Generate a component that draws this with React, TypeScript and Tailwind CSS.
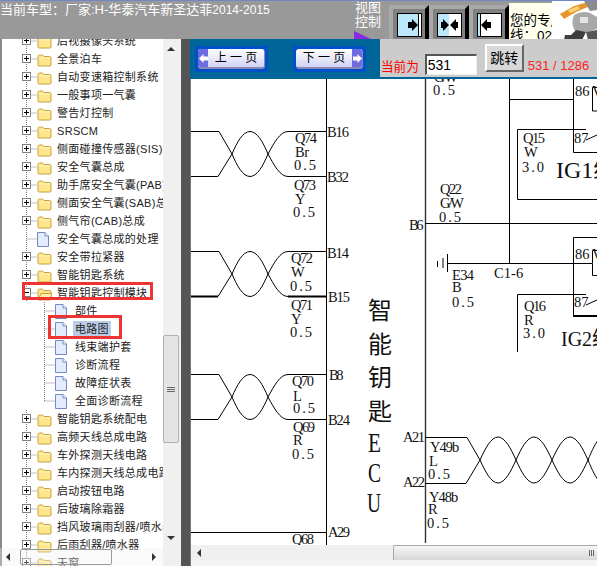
const CJK = "font-['Liberation_Sans','Noto_Sans_CJK_SC',sans-serif]";

type Kind = 'plus' | 'doc' | 'open' | 'child' | 'lastChild';

const rows: { label: string; kind: Kind }[] = [
  { label: '后视摄像头系统', kind: 'plus' },
  { label: '全景泊车', kind: 'plus' },
  { label: '自动变速箱控制系统', kind: 'plus' },
  { label: '一般事项一气囊', kind: 'plus' },
  { label: '警告灯控制', kind: 'plus' },
  { label: 'SRSCM', kind: 'plus' },
  { label: '侧面碰撞传感器(SIS)', kind: 'plus' },
  { label: '安全气囊总成', kind: 'plus' },
  { label: '助手席安全气囊(PAB)', kind: 'plus' },
  { label: '侧面安全气囊(SAB)总成', kind: 'plus' },
  { label: '侧气帘(CAB)总成', kind: 'plus' },
  { label: '安全气囊总成的处理', kind: 'doc' },
  { label: '安全带拉紧器', kind: 'plus' },
  { label: '智能钥匙系统', kind: 'plus' },
  { label: '智能钥匙控制模块', kind: 'open' },
  { label: '部件', kind: 'child' },
  { label: '电路图', kind: 'child' },
  { label: '线束端护套', kind: 'child' },
  { label: '诊断流程', kind: 'child' },
  { label: '故障症状表', kind: 'child' },
  { label: '全面诊断流程', kind: 'lastChild' },
  { label: '智能钥匙系统配电', kind: 'plus' },
  { label: '高频天线总成电路', kind: 'plus' },
  { label: '车外探测天线电路', kind: 'plus' },
  { label: '车内探测天线总成电路', kind: 'plus' },
  { label: '启动按钮电路', kind: 'plus' },
  { label: '后玻璃除霜器', kind: 'plus' },
  { label: '挡风玻璃雨刮器/喷水器', kind: 'plus' },
  { label: '后雨刮器/喷水器', kind: 'plus' },
  { label: '天窗', kind: 'plus' },
];

function Folder({ open }: { open?: boolean }) {
  return (
    <g transform="translate(37 3)">
      <path d="M1 3.5 Q1 2 2.5 2 H5.5 L7 3.5 H12.5 Q14 3.5 14 5 V12 Q14 13 13 13 H2 Q1 13 1 12 Z" fill="#ffe68a" stroke="#c7a23e" />
      {open ? <path d="M1.5 12.5 L4 6.5 H15 L13 12.5 Z" fill="#fff0ae" stroke="#c7a23e" /> : <path d="M2 5 H13" stroke="#fff6c8" />}
    </g>
  );
}

function Doc({ x }: { x: number }) {
  return (
    <g transform={`translate(${x} 2)`}>
      <path d="M0.5 0.5 H8 L11.5 4 V14.5 H0.5 Z" fill="#e4ebfb" stroke="#7189c4" />
      <path d="M8 0.5 V4 H11.5" fill="#fff" stroke="#7189c4" />
    </g>
  );
}

function TreeRow({ label, kind }: { label: string; kind: Kind }) {
  const isChild = kind === 'child' || kind === 'lastChild';
  const selected = label === '电路图';
  return (
    <div className="flex items-center h-[18px] shrink-0">
      <svg width={isChild ? 73 : 55} height="18" className="shrink-0">
        {!isChild && <path d="M26.5 0V18M26.5 9H37" stroke="#808080" strokeDasharray="1 1" />}
        {isChild && <path d={kind === 'child' ? 'M44.5 0V18M44.5 9H55' : 'M44.5 0V9M44.5 9H55'} stroke="#808080" strokeDasharray="1 1" />}
        {(kind === 'plus' || kind === 'open') && (
          <g>
            <rect x="22.5" y="4.5" width="8" height="8" fill="#fff" stroke="#808080" />
            <path d={kind === 'plus' ? 'M24 8.5H29M26.5 6V11' : 'M24 8.5H29'} stroke="#000" />
          </g>
        )}
        {(kind === 'plus' || kind === 'open') && <Folder open={kind === 'open'} />}
        {kind === 'doc' && <Doc x={37} />}
        {isChild && <Doc x={55} />}
      </svg>
      <span className={`whitespace-nowrap text-[11px] tracking-[0.3px] leading-[16px] px-[2px] text-[#222] ${selected ? 'bg-[#b9cde9]' : ''}`}>{label}</span>
    </div>
  );
}

function ToolButton({ variant }: { variant: 'right' | 'both' | 'left' }) {
  return (
    <svg width="40" height="39" className="shrink-0">
      <rect x="0" y="4" width="36" height="35" fill="#a8a8a8" />
      <rect x="4" y="8" width="32" height="31" fill="#808080" />
      <polygon points="36,8 40,4 40,39 36,39" fill="#000" />
      <rect x="8.5" y="12.5" width="24" height="23" fill="#fff" stroke="#000" />
      {variant === 'right' && (
        <g>
          <rect x="9" y="13" width="20" height="22" fill="#bce8fb" />
          <path d="M29.5 13V35" stroke="#000" />
          <path d="M19 21H23V18L29 24L23 30V27H19Z" fill="#000" />
        </g>
      )}
      {variant === 'both' && (
        <g>
          <rect x="9" y="13" width="11" height="22" fill="#bce8fb" />
          <path d="M14 18L20 24L14 30Z M27 18L21 24L27 30Z" fill="#000" />
          <path d="M12 21H14V27H12Z M27 21H29V27H27Z" fill="#000" />
        </g>
      )}
      {variant === 'left' && (
        <g>
          <rect x="9" y="13" width="2" height="22" fill="#bce8fb" />
          <path d="M11.5 13V35" stroke="#000" />
          <path d="M22 21H18V18L12 24L18 30V27H22Z" fill="#000" />
        </g>
      )}
    </svg>
  );
}

function Mascot() {
  return (
    <svg width="45" height="39" className="shrink-0 bg-white">
      <path d="M8 13L22 5L36 1L38 5L24 11L12 18Z" fill="#e8962c" />
      <path d="M16 9L26 5L28 8L18 12Z" fill="#f6d27a" />
      <path d="M32 0H45V9L38 10Z" fill="#8c8c8c" />
      <path d="M22 14Q30 9 38 12L45 16V28L36 31H24Q18 24 22 14Z" fill="#a8a8a8" />
      <path d="M28 16H36V22H28Z" fill="#e4e4e4" />
      <path d="M24 29L19 34H13L12 39H30L34 31Z" fill="#3e3e3e" />
      <path d="M34 31L36 39H45V29Z" fill="#555" />
    </svg>
  );
}

function PageButton({ label, dir }: { label: string; dir: 'prev' | 'next' }) {
  const arrow = (
    <div className="w-[10px] self-stretch bg-[#6c6ce0] flex items-center justify-center">
      <svg width="9" height="9">
        <path d={dir === 'prev' ? 'M0 4.5L4.5 0V2.5H9V6.5H4.5V9Z' : 'M9 4.5L4.5 0V2.5H0V6.5H4.5V9Z'} fill="#fff" />
      </svg>
    </div>
  );
  return (
    <div className="bg-[#0050c8] p-[3px] rounded-[1px]">
      <div className="flex items-center w-[67px] h-[20px] rounded-[3px] overflow-hidden border-b-2 border-r border-[#8a8ab8] bg-gradient-to-b from-[#ffffff] to-[#d0d4f4]">
        {dir === 'prev' && arrow}
        <span className="flex-1 text-center text-[12px] leading-none text-black whitespace-pre">{label}</span>
        {dir === 'next' && arrow}
      </div>
    </div>
  );
}

function Twist({ top, bold }: { top: number; bold?: boolean }) {
  const b = top + 45;
  const m = top + 22.5;
  return (
    <g fill="none" stroke="#000">
      <path d={`M190 ${top}H219L232 ${m}C237 ${m + 12} 243 ${b} 250 ${b}C257 ${b} 263 ${m + 12} 268 ${m}C274 ${m - 11} 280 ${top} 288 ${top}H326`} />
      <path d={`M218 ${b}L232 ${m}C237 ${m - 12} 243 ${top} 250 ${top}C257 ${top} 263 ${m - 12} 268 ${m}C274 ${m + 11} 280 ${b} 288 ${b}`} />
      <path d={`M190 ${b}H218M288 ${b}H326`} strokeWidth={bold ? 2 : 1} />
    </g>
  );
}

function T({ x, y, t }: { x: number; y: number; t: string }) {
  const w = t === 'G/W' ? 8 : t === 'Br' ? 7 : 7.3;
  return (
    <text x={x} y={y} fontSize="14.5" textLength={t.length * w} lengthAdjust="spacing" fill="#111">
      {t}
    </text>
  );
}

const labels: [number, number, string][] = [
  [295, 143, 'Q74'], [295, 157, 'Br'], [294, 170, '0.5'], [327, 137, 'B16'], [327, 182, 'B32'],
  [294, 190, 'Q73'], [295, 204, 'Y'], [293, 217, '0.5'], [291, 263, 'Q72'], [291, 277, 'W'],
  [290, 291, '0.5'], [327, 258, 'B14'], [328, 302, 'B15'], [291, 310, 'Q71'], [291, 324, 'Y'],
  [290, 337, '0.5'], [292, 386, 'Q70'], [293, 401, 'L'], [293, 413, '0.5'], [329, 380, 'B8'],
  [328, 425, 'B24'], [293, 432, 'Q69'], [293, 445, 'R'], [292, 459, '0.5'], [328, 537, 'A29'],
  [292, 544, 'Q68'], [434, 82, 'G/W'], [433, 95, '0.5'], [575, 96, '86'], [574, 143, '87'],
  [523, 143, 'Q15'], [524, 157, 'W'], [522, 172, '3.0'], [409, 230, 'B6'], [440, 194, 'Q22'],
  [440, 208, 'G/W'], [439, 222, '0.5'], [452, 280, 'E34'], [452, 292, 'B'], [452, 307, '0.5'],
  [494, 278, 'C1-6'], [575, 259, '86'], [574, 307, '87'], [524, 311, 'Q16'], [524, 325, 'R'],
  [523, 338, '3.0'], [403, 442, 'A21'], [403, 487, 'A22'], [430, 452, 'Y49b'], [429, 466, 'L'],
  [428, 479, '0.5'], [429, 502, 'Y48b'], [428, 514, 'R'], [427, 528, '0.5'],
];

function Diagram() {
  return (
    <svg viewBox="190 79 407 466" width="407" height="466" className="block font-['Liberation_Serif','Noto_Sans_CJK_SC',serif]">
      <Twist top={131.5} />
      <Twist top={251.5} bold />
      <Twist top={374.5} />
      <g fill="none" stroke="#000">
        <path d="M190 532.5H326M326.5 79V545" />
        <path d="M425.5 79V543" stroke="#333" strokeWidth="1.4" />
        <path d="M509.5 79V263M509.5 99.5H573M425 223.5H597" />
        <path d="M573.5 79V152.5H597M592.5 111V87.5H597M592.5 111H597" />
        <path d="M586 129.5H517.5V199.5H597M586 140L597 135" />
        <path d="M447.5 254V272M443 258V268M437.5 261V267M447 263.5H592" />
        <path d="M597 237.5H573.5V316H597" />
        <path d="M573 316H597" strokeWidth="2" />
        <path d="M592.5 263.5V250.5H597M592.5 263.5V275.5H597" />
        <path d="M586 294.5H517.5V352M586 305L597 300" />
        <path d="M425 437.5H467L480 460C485 471 491 483 498 483C505 483 511 471 516 460C521 449 527 437 534 437C541 437 547 449 552 460C557 471 563 483 570 483C577 483 583 471 588 460C592 450 596 442 600 438" />
        <path d="M425 483.5H466L480 460C485 449 491 437 498 437C505 437 511 449 516 460C521 471 527 483 534 483C541 483 547 471 552 460C557 449 563 437 570 437C577 437 583 449 588 460C592 470 596 478 600 482" />
      </g>
      {labels.map(([x, y, t], i) => (
        <T key={i} x={x} y={y} t={t} />
      ))}
      <text x="592" y="96" fontSize="14" fill="#111">V</text>
      <text x="592" y="259" fontSize="14" fill="#111">V</text>
      <text x="556" y="178" fontSize="24" fill="#111">IG1继</text>
      <text x="561" y="346" fontSize="20" fill="#111">IG2继</text>
      <g fontSize="24" fill="#111">
        <text x="368" y="319">智</text>
        <text x="368" y="353">能</text>
        <text x="368" y="386">钥</text>
        <text x="368" y="420">匙</text>
      </g>
      <g fontSize="28" fill="#111">
        <text x="368" y="452" textLength="13" lengthAdjust="spacingAndGlyphs">E</text>
        <text x="368" y="482" textLength="13" lengthAdjust="spacingAndGlyphs">C</text>
        <text x="367" y="512" textLength="14" lengthAdjust="spacingAndGlyphs">U</text>
      </g>
    </svg>
  );
}

export default function App() {
  return (
    <div className={`w-[597px] h-[566px] overflow-hidden flex flex-col bg-white ${CJK}`}>
      {/* top bar */}
      <div className="h-[39px] shrink-0 flex bg-[#999999] border-t border-[#7088c8]">
        <div className="w-[354px] shrink-0 text-white text-[13px] leading-[18px] whitespace-nowrap">
          当前车型：厂家:H-华泰汽车新圣达菲<span className="text-[12px]">2014-2015</span>
        </div>
        <div className="w-[35px] shrink-0 flex flex-col text-white text-[13px] leading-[14px] relative">
          <span className="pl-[1px]">视图</span>
          <span className="pl-[1px]">控制</span>
          <svg width="18" height="8" className="mt-[2px]">
            <path d="M0 0L17 8H0Z" fill="#8a2be2" />
          </svg>
        </div>
        <ToolButton variant="right" />
        <ToolButton variant="both" />
        <ToolButton variant="left" />
        <div className="w-[43px] shrink-0 mt-[2px] bg-[#ffffee] overflow-hidden text-black text-[13.5px] leading-[15px] pt-[10px] pl-[1px] whitespace-nowrap">
          <div>您的专用</div>
          <div>线：0288</div>
        </div>
        <Mascot />
      </div>

      <div className="flex-1 min-h-0 flex">
        {/* tree panel */}
        <div className="w-[190px] shrink-0 flex relative overflow-hidden">
          <div className="w-[163px] shrink-0 bg-white border-l-2 border-[#8a8a8a] overflow-hidden relative">
            <div className="flex flex-col -mt-[7px] -ml-[2px]">
              {rows.map((r) => (
                <TreeRow key={r.label} label={r.label} kind={r.kind} />
              ))}
            </div>
            <div className="absolute left-[20px] top-[243px] w-[131px] h-[18px] border-[3px] border-[#ee3333]" />
            <div className="absolute left-[46px] top-[276px] w-[74px] h-[24px] border-[3px] border-[#ee3333]" />
          </div>
          <div className="w-[18px] shrink-0 bg-[#f0f0f0] flex flex-col items-center pt-[8px]">
            <svg width="8" height="5" className="shrink-0 mr-[2px]">
              <path d="M4 0L8 4H0Z" fill="#333" />
            </svg>
            <div className="w-[16px] h-[108px] mt-[283px] mr-[2px] shrink-0 bg-[#e4e4e4] border border-[#b0b0b0] rounded-[2px] flex flex-col items-center justify-center gap-[1px]">
              <div className="w-[8px] h-px bg-[#666]" />
              <div className="w-[8px] h-px bg-[#666]" />
              <div className="w-[8px] h-px bg-[#666]" />
            </div>
            <svg width="8" height="5" className="shrink-0 mt-[93px] mr-[2px]">
              <path d="M4 4L8 0H0Z" fill="#333" />
            </svg>
          </div>
          <div className="w-[9px] shrink-0 bg-[#555555]" />
          {/* horizontal scrollbar, see-through in the reference */}
          <div className="absolute left-0 bottom-0 w-[181px] h-[18px] bg-[#f0f0f0]/35 flex items-center pl-[6px]">
            <svg width="5" height="8" className="shrink-0">
              <path d="M0 4L4 0V8Z" fill="#333" />
            </svg>
            <div className="w-[92px] h-[16px] ml-[9px] shrink-0 rounded-[2px] border border-[#999]" />
            <svg width="5" height="8" className="shrink-0 ml-[40px]">
              <path d="M4 4L0 0V8Z" fill="#333" />
            </svg>
          </div>
        </div>

        {/* document panel */}
        <div className="flex-1 min-w-0 flex flex-col">
          <div className="h-[40px] shrink-0 flex border-b-2 border-[#006699]">
            <div className="w-[190px] shrink-0 bg-[#006699] flex items-start gap-[25px] pl-[5px] pt-[7px] -mb-[2px]">
              <PageButton label="上 一 页" dir="prev" />
              <PageButton label="下 一 页" dir="next" />
            </div>
            <div className="flex-1 bg-[#cccccc] flex items-start relative">
              <span className="text-[#ff0000] text-[12.6px] leading-[16px] mt-[20px] ml-[1px] whitespace-nowrap">当前为</span>
              <input
                readOnly
                value="531"
                className="w-[52px] h-[21px] ml-[6px] mt-[15px] bg-white border-t-2 border-l-2 border-[#555] border-r border-b border-r-[#eee] border-b-[#eee] pl-[1px] text-[14px] text-black outline-none"
              />
              <button className="w-[39px] h-[28px] ml-[8px] mt-[5px] bg-[#d8d8d8] border-2 border-t-white border-l-white border-r-[#666] border-b-[#666] text-[14px] text-black">跳转</button>
              <span className="text-[#ff2222] text-[13px] leading-[16px] mt-[19px] ml-[4px] whitespace-nowrap">531 / 1286</span>
            </div>
          </div>
          <div className="flex-1 min-h-0 bg-white overflow-hidden border-l border-[#777] relative">
            <div className="-ml-px">
              <Diagram />
            </div>
          </div>
          <div className="h-[15px] shrink-0 flex items-center bg-[#f0f0f0] border-l border-[#777]">
            <svg width="5" height="8" className="shrink-0 ml-[6px]">
              <path d="M0 4L4 0V8Z" fill="#333" />
            </svg>
            <div className="ml-[191px] flex-1 h-[15px] bg-gradient-to-b from-[#f6f6f6] to-[#d8d8d8] border-t border-l border-[#a8a8a8] rounded-tl-[2px] flex items-center justify-end gap-[1px] pr-[3px]">
              <div className="w-px h-[6px] bg-[#666]" />
              <div className="w-px h-[6px] bg-[#666]" />
              <div className="w-px h-[6px] bg-[#666]" />
            </div>
          </div>
          <div className="h-[6px] shrink-0 bg-[#f4f4f4] border-l border-[#777]" />
        </div>
      </div>
    </div>
  );
}
